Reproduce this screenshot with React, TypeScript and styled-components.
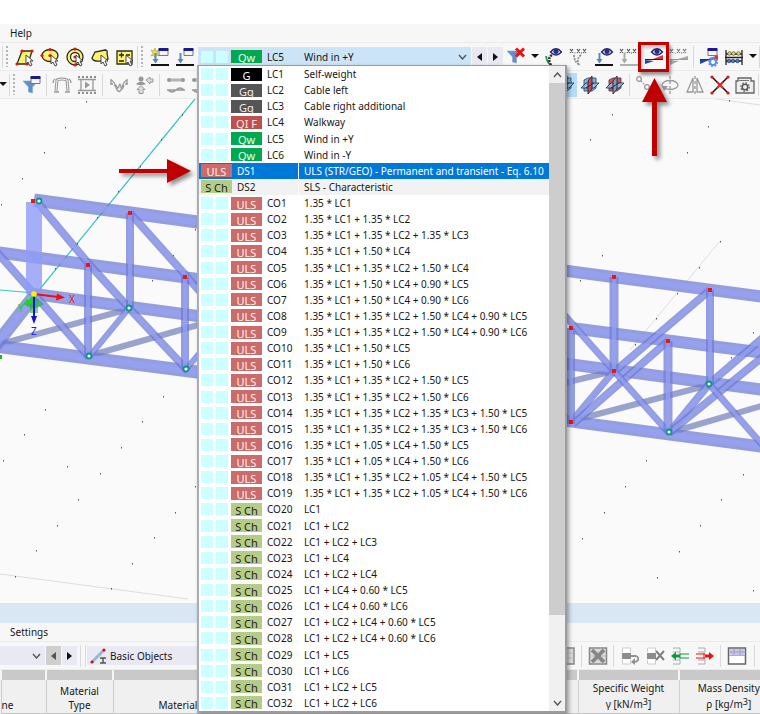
import React from "react";
import styled, { createGlobalStyle, css } from "styled-components";

const GlobalStyle = createGlobalStyle`
  * { box-sizing: border-box; }
  body {
    margin: 0;
    background: #fff;
    color: #161616;
    font-family: "Noto Sans", "Open Sans", sans-serif;
    font-size: 10px;
    line-height: 16px;
  }
  button, select { font: inherit; color: inherit; border: 0; margin: 0; padding: 0; background: none; }
`;

/* ---------- layout ---------- */

const Page = styled.div`
  display: flex;
  flex-direction: column;
  min-height: 100vh;
  padding-top: 24px;
  overflow: hidden;
`;

const MenuBar = styled.nav`
  display: flex;
  align-items: center;
  height: 19px;
  padding: 0 10px;
  background: #f7f7f7;
  border-bottom: 1px solid #ebebeb;
`;

const MenuButton = styled.button`
  line-height: 16px;
`;

const Toolbar = styled.div<{ $start?: number }>`
  display: flex;
  align-items: center;
  height: 28px;
  padding-left: ${(p) => p.$start ?? 0}px;
  background: #f7f7f7;
  border-bottom: 1px solid #ebebeb;
`;

const Grip = styled.span`
  flex: none;
  width: 9px;
  height: 21px;
  background: radial-gradient(circle at 1px 1px, #b4b4b4 1px, transparent 1px) 3px 0 / 3px 4px repeat-y;
`;

const Separator = styled.span<{ $gap?: number }>`
  flex: none;
  width: 1px;
  height: 22px;
  margin: 0 ${(p) => p.$gap ?? 0}px;
  background: #dadada;
`;

const ToolButton = styled.button<{ $narrow?: boolean; $active?: boolean; $edge?: boolean }>`
  position: relative;
  display: flex;
  flex: none;
  align-items: center;
  justify-content: center;
  width: ${(p) => (p.$narrow ? 13 : 25)}px;
  height: 24px;
  ${(p) => p.$edge && css`margin-left: -4px;`}
  ${(p) => p.$active && css`background: #b5dcf8;`}
`;

const StepButton = styled.button<{ $dim?: boolean }>`
  display: flex;
  flex: none;
  align-items: center;
  justify-content: center;
  width: 15px;
  height: 19px;
  margin-left: 1px;
  background: ${(p) => (p.$dim ? "#cfcfcf" : "#e9e9f4")};
`;

const RightGroup = styled.div`
  display: flex;
  align-items: center;
  margin-left: auto;
`;

/* ---------- load case selector ---------- */

const LoadCase = styled.div`
  position: relative;
  z-index: 5;
  flex: 1;
  min-width: 200px;
  margin-left: 1px;
`;

const LoadCaseButton = styled.button`
  display: flex;
  align-items: center;
  width: 100%;
  height: 19px;
  padding: 0 4px 0 3px;
  background: #cce4f7;
  text-align: left;
`;

const Popup = styled.div`
  position: absolute;
  top: 18px;
  left: -1px;
  display: flex;
  width: 370px;
  height: 648px;
  background: #fff;
  border: 2px solid #9b9ba1;
  border-top-width: 1px;
  border-left-color: #a9abb6;
  box-shadow: 2px 2px 4px rgba(0, 0, 0, 0.35);
`;

const OptionList = styled.ul`
  display: flex;
  flex: 1;
  flex-direction: column;
  min-width: 0;
  margin: 0;
  padding: 0;
  list-style: none;
`;

const Option = styled.li<{ $selected?: boolean; $shaded?: boolean }>`
  position: relative;
  display: flex;
  flex: 1 1 0;
  align-items: center;
  min-height: 0;
  padding-left: 2px;
  white-space: nowrap;
  color: ${(p) => (p.$selected ? "#fff" : "inherit")};
  background: ${(p) => (p.$selected ? "#0078d7" : p.$shaded ? "#f2f2f2" : "#fff")};
`;

const Swatch = styled.span`
  flex: none;
  width: 12px;
  height: 12px;
  margin-right: 3px;
  background: #ccffff;
`;

const tones = {
  green: ["#00a94f", "#e9fff0"],
  black: ["#000000", "#ffffff"],
  gray: ["#555555", "#eeeeee"],
  red: ["#c0504d", "#ffe8e4"],
  rose: ["#cc6b6b", "#fff0ee"],
  olive: ["#b5cc86", "#222222"],
} as const;
type Tone = keyof typeof tones;

const Badge = styled.span<{ $tone: Tone }>`
  flex: none;
  width: 31px;
  height: 13px;
  font-size: 11px;
  line-height: 15px;
  text-align: center;
  background: ${(p) => tones[p.$tone][0]};
  color: ${(p) => tones[p.$tone][1]};
`;

const Code = styled.span<{ $wide?: boolean }>`
  display: flex;
  flex: none;
  align-items: center;
  align-self: stretch;
  width: ${(p) => (p.$wide ? 67 : 37)}px;
  padding-left: 5px;
  border-right: 1px solid ${(p) => (p.$wide ? "#ffffff" : "transparent")};
`;

const Description = styled.span`
  flex: 1;
  min-width: 0;
  padding-left: 5px;
  line-height: 16px;
`;

const ScrollBar = styled.div`
  display: flex;
  flex: none;
  flex-direction: column;
  width: 16px;
  background: #f0f0f0;
`;

const ScrollButton = styled.button`
  display: flex;
  align-items: center;
  justify-content: center;
  height: 17px;
`;

const ScrollTrack = styled.div`
  flex: 1;
`;

const ScrollThumb = styled.div`
  height: 87%;
  background: #cdcdcd;
`;

/* ---------- callouts ---------- */

const CalloutBox = styled.span`
  position: absolute;
  inset: -3px;
  border: 3px solid #c00000;
  box-shadow: 2px 3px 3px rgba(0, 0, 0, 0.4), inset 2px 3px 3px rgba(0, 0, 0, 0.2);
  z-index: 3;
`;

const CalloutUp = styled.svg`
  position: absolute;
  top: 33px;
  left: 1px;
  z-index: 3;
  overflow: visible;
  pointer-events: none;
  filter: drop-shadow(3px 3px 2px rgba(0, 0, 0, 0.45));
`;

const CalloutRight = styled.svg`
  position: absolute;
  top: -4px;
  right: calc(100% + 8px);
  overflow: visible;
  pointer-events: none;
  filter: drop-shadow(3px 3px 2px rgba(0, 0, 0, 0.45));
`;

/* ---------- work area and lower panel ---------- */

const WorkArea = styled.main`
  display: flex;
  flex: 1;
  min-height: 300px;
  background: #fafafa;
`;

const Model = styled.svg`
  display: block;
  width: 100%;
  height: auto;
`;

const TitleBand = styled.div`
  height: 20px;
  background: #d9e6f3;
`;

const FieldSelect = styled.select`
  appearance: none;
  flex: 1;
  min-width: 0;
  height: 19px;
`;

const Field = styled.label<{ $width: number }>`
  display: flex;
  flex: none;
  align-items: center;
  gap: 3px;
  width: ${(p) => p.$width}px;
  height: 19px;
  padding-right: 4px;
  background: #e9e9f4;
`;

const DataTable = styled.table`
  width: 100%;
  table-layout: fixed;
  border-collapse: collapse;
  background: #f0f0f0;
  border-bottom: 1px solid #c4c4c4;
`;

const StripCell = styled.td`
  height: 10px;
  padding: 0;
  background: #c9c9c9;
  border-left: 2px solid #f4f4f4;
`;

const HeadCell = styled.th<{ $align?: "left" | "center"; $inset?: number; $loose?: boolean }>`
  height: 33px;
  padding: 0 0 1px ${(p) => p.$inset ?? 0}px;
  overflow: hidden;
  font-weight: 400;
  line-height: ${(p) => (p.$loose ? 16 : 14)}px;
  white-space: nowrap;
  text-align: ${(p) => p.$align ?? "center"};
  vertical-align: bottom;
  border-left: 1px solid #d0d0d0;
  sup { font-size: 9px; line-height: 0; vertical-align: 3px; }
`;

/* ---------- icons ---------- */

const Icon = ({ children }: { children: React.ReactNode }) => (
  <svg width="20" height="20" viewBox="0 0 20 20" fill="none" aria-hidden="true">
    {children}
  </svg>
);

const Cursor = () => (
  <path d="M11 8v9l2-2 2 4 2-1-2-4h3z" fill="#fff" stroke="#444" strokeWidth="1" />
);
const Dot = ({ x, y, c = "#e11" }: { x: number; y: number; c?: string }) => (
  <circle cx={x} cy={y} r="1.600" fill={c} />
);
const yellow = { fill: "#fbf26e", stroke: "#2c2c1c", strokeWidth: 1.3 };

const SelectRhomboid = () => (
  <Icon>
    <path d="M7 4h10l-4 13H2z" {...yellow} />
    <Dot x={7} y={4} /><Dot x={17} y={4} /><Dot x={2} y={17} /><Dot x={12} y={17} />
    <Cursor />
  </Icon>
);
const SelectEllipse = () => (
  <Icon>
    <ellipse cx="10" cy="8.500" rx="8" ry="6" {...yellow} />
    <Dot x={10} y={2.5} /><Dot x={2} y={8.5} /><Dot x={10} y={8.5} />
    <Cursor />
  </Icon>
);
const SelectRing = () => (
  <Icon>
    <circle cx="10" cy="10" r="8" {...yellow} />
    <circle cx="10" cy="10" r="4.500" fill="#fff" stroke="#2c2c1c" strokeWidth="1.300" />
    <Dot x={10} y={2} /><Dot x={10} y={10} /><Dot x={10} y={18} />
    <Cursor />
  </Icon>
);
const SelectPolygon = () => (
  <Icon>
    <path d="M2 11l3-6 10-2q3 0 2 3l1 6-7 2q-8 1-9-3z" {...yellow} />
    <Cursor />
  </Icon>
);
const SelectPlusMinus = () => (
  <Icon>
    <path d="M2 4h15v13H2z" {...yellow} />
    <path d="M4 8h5M6.500 5.500v5M4 14h5M11 8h4" stroke="#222" strokeWidth="1.300" />
    <Cursor />
  </Icon>
);
const WindowGlyph = () => (
  <>
    <path d="M9 1.500h9v7H9z" fill="#f5f5f5" stroke="#777" />
    <path d="M9 1.500h9v2H9z" fill="#1a1a8c" stroke="#1a1a8c" />
  </>
);
const DownLoad = ({ c = "#5b86bd" }: { c?: string }) => (
  <>
    <path d="M5.500 6v9" stroke={c} strokeWidth="2" />
    <path d="M2.500 12h6l-3 4.500z" fill={c} />
  </>
);
const NewLoad = () => (
  <Icon>
    <path d="M5 1l1 3 3-1-2 3 2 3-3-1-1 3-1-3-3 1 2-3-2-3 3 1z" fill="#e6e04a" stroke="#a8a22a" strokeWidth=".6" />
    <DownLoad />
    <WindowGlyph />
    <path d="M1 18h18" stroke="#111" strokeWidth="2" />
  </Icon>
);
const EditLoad = () => (
  <Icon>
    <DownLoad />
    <WindowGlyph />
    <path d="M1 18h18" stroke="#111" strokeWidth="2" />
  </Icon>
);
const Funnel = ({ y = 0 }: { y?: number }) => (
  <path d={`M1 ${4 + y}h15l-5.500 6v6l-4-1v-5z`} fill="#5f8fcb" stroke="#86a9d6" strokeWidth=".7" />
);
const FunnelOff = () => (
  <Icon>
    <Funnel />
    <path d="M10 1.500l8 8m0-8l-8 8" stroke="#f01010" strokeWidth="3" />
  </Icon>
);
const FunnelWindow = () => (
  <Icon>
    <Funnel y={2} />
    <WindowGlyph />
  </Icon>
);
const Eye = ({ x = 12, y = 5 }: { x?: number; y?: number }) => (
  <>
    <path d={`M${x - 5.5} ${y}q5.500-6.500 11 0q-5.500 6-11 0z`} fill="#e4e4f8" stroke="#22226a" strokeWidth="1.300" />
    <circle cx={x} cy={y - 0.5} r="2.500" fill="#2a2a88" />
  </>
);
const EyeLoads = () => (
  <Icon>
    <path d="M2 9q1 8 6 9" stroke="#1d9a52" strokeWidth="1.800" />
    <path d="M8 8c-5 3-2 8-1 11" stroke="#333" strokeWidth="2.500" strokeDasharray="2 1" />
    <Eye x={12} />
  </Icon>
);
const Marks = ({ c = "#555" }: { c?: string }) => (
  <path
    d="M1 2l3 4m0-4L1 6M8 2l3 4m0-4L8 6M14 2l3 4m0-4l-3 4M5.500 6h1M12 6h1"
    stroke={c}
    strokeWidth="1.200"
  />
);
const ValuesCurve = () => (
  <Icon>
    <Marks />
    <path d="M5 8q0 7 6 10M12 8q-5 4-2 10" stroke="#8c8c8c" strokeWidth="1.800" strokeDasharray="2 1" />
  </Icon>
);
const EyeSupport = () => (
  <Icon>
    <DownLoad />
    <Eye x={13} />
    <path d="M1 18h18" stroke="#111" strokeWidth="2" />
  </Icon>
);
const ValuesSupport = () => (
  <Icon>
    <Marks />
    <DownLoad c="#aaa" />
    <path d="M1 18h18" stroke="#999" strokeWidth="1.500" />
  </Icon>
);
const EyeResults = () => (
  <Icon>
    <path d="M1 13v4l9-3z" fill="#1f43b0" />
    <path d="M9 12l10-4v5z" fill="#e03333" />
    <path d="M1 12.500h18" stroke="#222" />
    <Eye x={13} />
  </Icon>
);
const ValuesResults = () => (
  <Icon>
    <Marks c="#777" />
    <path d="M1 13v5l9-4zM9 12l10-3v4z" fill="#aaa" />
    <path d="M1 12.500h18" stroke="#999" />
  </Icon>
);
const ResultSettings = () => (
  <Icon>
    <WindowGlyph />
    <path d="M1 12v5l9-4z" fill="#1f43b0" />
    <path d="M9 12l10-4v5z" fill="#e03333" />
    <path d="M1 12.500h10" stroke="#333" />
    <circle cx="14" cy="15" r="3" fill="#fff" stroke="#5c8fe0" strokeWidth="2" />
    <circle cx="14" cy="15" r="4.500" stroke="#5c8fe0" strokeWidth="1.200" strokeDasharray="1.800 1.700" />
  </Icon>
);
const Abacus = () => (
  <Icon>
    <path d="M2 3v15M18 3v15M2 7h16M2 14h16M1 10.500h18" stroke="#222" strokeWidth="1.300" />
    <g fill="#f2e04a" stroke="#444" strokeWidth=".7">
      <circle cx="5.500" cy="6.500" r="1.800" /><circle cx="9.500" cy="6.500" r="1.800" /><circle cx="14.500" cy="6.500" r="1.800" />
    </g>
    <g fill="#4a7ae0" stroke="#234" strokeWidth=".7">
      <circle cx="5" cy="14" r="1.800" /><circle cx="9" cy="14" r="1.800" /><circle cx="13.500" cy="14" r="1.800" />
    </g>
  </Icon>
);
const gray = { stroke: "#999", strokeWidth: 1.3 };
const BentFrame = () => (
  <Icon>
    <path d="M4 16L5 5q5-2 10 0l1 11" stroke="#999" strokeWidth="3" />
    <path d="M4 16L5 5q5-2 10 0l1 11" stroke="#f2f2f2" strokeWidth="1" />
    <path d="M1 8q0-3 2-4M19 8q0-3-2-4M2 17h5M13 17h5" {...gray} />
  </Icon>
);
const Film = () => (
  <Icon>
    <path d="M1 2h18M1 18h18" stroke="#8e8e8e" strokeWidth="2" strokeDasharray="2 2" />
    <path d="M1 4.500h18M1 15.500h18M4 5v10M16 5v10" {...gray} />
    <path d="M8 6.500v7l5-3.500z" fill="#999" />
  </Icon>
);
const Diagram = () => (
  <Icon>
    <path d="M2 4v5M18 4v5M1 9h3M16 9h3" {...gray} />
    <path d="M2 5q4 2 5 8 3 7 6 0 1-6 5-8" {...gray} />
    <path d="M5 11q2-2 3 1t2-1 2 1 3-2" {...gray} />
  </Icon>
);
const LoadArrows = () => (
  <Icon>
    <circle cx="7" cy="4" r="2.500" fill="#999" />
    <path d="M2 9q5-5 10 0l-3 1H4z" fill="#999" />
    <path d="M12 5l4-3v2h3v3h-3v2zM7 10.500l4 4H9v4H5v-4H3z" fill="#ddd" stroke="#999" />
  </Icon>
);
const Deformation = () => (
  <Icon>
    <path d="M3 5h14" stroke="#b5b5b5" strokeWidth="3" />
    <circle cx="3" cy="5" r="2" fill="#999" /><circle cx="17" cy="5" r="2" fill="#999" />
    <path d="M1 15h18M2 15q4 4 8 0t8 0" {...gray} />
  </Icon>
);
const ClipPlane = ({ solid = "#7fb2d6", slab = "#d6404a" }: { solid?: string; slab?: string }) => (
  <Icon>
    <path d="M4 5l4-2h8v10l-4 3H4z" fill={solid} stroke="#2c4f6a" strokeWidth=".9" />
    <path d="M1 13l5-5h13l-5 5z" fill="#8ec2e4" fillOpacity=".85" stroke="#1f3e58" strokeWidth=".9" />
    <path d="M8 6l4-5v13l-4 5z" fill={slab} fillOpacity=".9" stroke="#3d1a2a" strokeWidth=".9" />
    <path d="M6 13l8-5" stroke="#17324a" />
  </Icon>
);
const MoveNodes = () => (
  <Icon>
    <circle cx="4" cy="4" r="2.300" {...gray} /><circle cx="12" cy="12" r="2.300" {...gray} />
    <path d="M6 6l4 4" {...gray} strokeDasharray="1.500 1.500" />
  </Icon>
);
const Rotate = () => (
  <Icon>
    <ellipse cx="10" cy="10" rx="8" ry="4.500" {...gray} />
    <path d="M10 1v18" {...gray} strokeDasharray="3 2" />
    <path d="M2 11h6l-4 5z" fill="#999" />
  </Icon>
);
const Mirror = () => (
  <Icon>
    <path d="M8 3v14H2zM12 3v14h6z" {...gray} /><path d="M10 1v18" {...gray} strokeDasharray="3 2" />
  </Icon>
);
const CrossNodes = () => (
  <Icon>
    <path d="M2 2l16 16M18 2L2 18" stroke="#111" strokeWidth="1.500" />
    <Dot x={2} y={2} /><Dot x={18} y={2} /><Dot x={2} y={18} /><Dot x={18} y={18} />
    <path d="M7 7l6 6m0-6l-6 6" stroke="#e22" strokeWidth="1.800" />
  </Icon>
);
const Camera = () => (
  <Icon>
    <path d="M3 3h13v3h3v12H1V6h2z" fill="#eee" stroke="#666" strokeWidth="1.300" />
    <path d="M4 5.500h10" stroke="#777" />
    <circle cx="10" cy="12" r="2.800" stroke="#555" strokeWidth="1.500" />
    <circle cx="10" cy="12" r="4.200" stroke="#555" strokeWidth="1.200" strokeDasharray="1.500 1.800" />
  </Icon>
);
const Caret = () => (
  <svg width="8" height="5" viewBox="0 0 8 5" aria-hidden="true"><path d="M0 0h8L4 4z" fill="#111" /></svg>
);
const Chevron = ({ up }: { up?: boolean }) => (
  <svg width="9" height="6" viewBox="0 0 9 6" fill="none" aria-hidden="true">
    <path d={up ? "M1 5l3.500-4L8 5" : "M1 1l3.500 4L8 1"} stroke="#555" strokeWidth="1.400" />
  </svg>
);
const Triangle = ({ left, c = "#111" }: { left?: boolean; c?: string }) => (
  <svg width="5" height="8" viewBox="0 0 5 8" aria-hidden="true">
    <path d={left ? "M5 0v8L0 4z" : "M0 0v8l5-4z"} fill={c} />
  </svg>
);
const MemberGlyph = () => (
  <Icon>
    <path d="M5 16L17 4" stroke="#9bb5da" strokeWidth="3" />
    <Dot x={5} y={16} c="#c11" /><Dot x={17} y={4} c="#c11" />
    <path d="M13 12h6M16 12v5M13 17h6" stroke="#555" strokeWidth="1.500" />
  </Icon>
);
const GridOne = () => (
  <Icon><path d="M2 2h16v16H2z" fill="#ddd" stroke="#888" strokeWidth="1.500" /><path d="M2 7h16M2 12h16M12 2v16" stroke="#bbb" /></Icon>
);
const GridDelete = () => (
  <Icon>
    <path d="M1.500 2h17v16h-17z" fill="#dcdcdc" stroke="#888" strokeWidth="1.500" />
    <path d="M2 6h16M2 10h16M2 14h16M7 2v16M13 2v16" stroke="#bbb" />
    <path d="M4 4l12 12M16 4L4 16" stroke="#858585" strokeWidth="3.500" />
  </Icon>
);
const RowStack = () => (
  <>
    <path d="M2.500 6V2h8v4M2.500 14v4h8v-4" fill="#fff" stroke="#ccc" />
    <path d="M2 7h9v6H2z" fill="#8c8c8c" />
  </>
);
const RowCopy = () => (
  <Icon><RowStack /><path d="M11 10h5q3 1 2 4-1 2-4 2" stroke="#909090" strokeWidth="1.800" /><path d="M15 12v7l-4-3z" fill="#909090" /></Icon>
);
const RowDelete = () => (
  <Icon><RowStack /><path d="M11 5l8 9m0-9l-8 9" stroke="#808080" strokeWidth="2" /></Icon>
);
const RowArrow = ({ c, right }: { c: string; right?: boolean }) => (
  <Icon>
    <path d="M3 2h7v4H3M3 18h7v-4H3" stroke="#aaa" />
    <path d={right ? "M1 8h9M1 12h9M9 7v6" : "M19 8h-9M19 12h-9M10 7v6"} stroke={c} />
    <path d={right ? "M10 8.500h4V6l5 4-5 4v-2.500h-4z" : "M10 8.500H6V6l-5 4 5 4v-2.500h4z"} fill={c} />
  </Icon>
);
const TableView = () => (
  <Icon>
    <path d="M1.500 2h17v16h-17z" fill="#fff" stroke="#666" strokeWidth="1.500" />
    <path d="M2 3h16v6H2z" fill="#c5c5ee" /><path d="M2 6h16M2 9.500h16M7 3v6M13 3v6" stroke="#9a9ab8" strokeWidth=".8" />
  </Icon>
);

/* ---------- structural model ---------- */

type Seg = [number, number, number, number, number];

const chords: Seg[] = [
  [34, 200, 205, 223, 13], [-5, 252, 205, 280, 12], [34, 294, 205, 317, 12], [-5, 346, 205, 373, 13],
  [560, 270, 765, 297, 12], [571, 328, 765, 353, 12], [560, 363, 765, 390, 12], [560, 420, 765, 447, 12],
];
const posts: Seg[] = [
  [130, 213, 130, 308, 8], [88, 265, 88, 357, 8], [185, 277, 185, 369, 8],
  [614, 277, 614, 371, 9], [710, 290, 710, 384, 8], [571, 328, 571, 424, 8], [668, 341, 668, 432, 9],
];
const braces: Seg[] = [
  [38, 203, 88, 263, 8], [88, 263, 129, 308, 8], [129, 308, 188, 371, 8], [130, 213, 205, 297, 8],
  [34, 294, 89, 357, 8], [-5, 250, 34, 294, 8], [34, 296, -5, 346, 13], [89, 357, 129, 308, 6],
  [186, 369, 205, 347, 6],
  [710, 290, 614, 372, 8], [614, 371, 571, 422, 7], [668, 341, 573, 424, 8], [560, 310, 614, 371, 7],
  [614, 371, 669, 433, 7], [709, 384, 669, 433, 8], [765, 336, 709, 384, 8], [765, 355, 669, 433, 8],
  [709, 384, 765, 448, 7],
];
const ties: Seg[] = [
  [0, 344, 129, 309, 6], [92, 355, 205, 323, 6], [560, 384, 614, 371, 6], [575, 420, 709, 385, 6], [672, 432, 765, 405, 6],
];
const redNodes = [[33, 201], [130, 213], [88, 265], [185, 277], [614, 277], [710, 290], [571, 328], [668, 341], [614, 371], [571, 422]];
const tealNodes = [[39, 201], [129, 308], [89, 356], [186, 369], [709, 384], [669, 432]];
const gridDots = [
  [44, 152], [22, 178], [1, 204], [152, 280], [67, 466], [195, 229], [173, 255], [109, 332], [13, 319], [86, 101],
  [65, 127], [182, 114], [161, 139], [140, 166], [118, 191], [97, 217], [77, 243], [55, 268], [729, 100], [612, 114],
  [708, 126], [590, 139], [687, 152], [602, 255], [580, 280], [720, 241], [699, 267], [677, 293], [656, 318],
  [635, 344], [753, 332], [731, 357], [593, 396], [690, 408], [646, 460], [743, 474], [625, 486], [721, 499],
  [604, 512], [700, 525], [582, 538], [679, 551], [657, 577], [753, 590], [45, 409], [24, 434], [3, 460], [163, 396],
  [142, 421], [121, 447], [100, 473], [78, 499], [57, 525], [36, 550], [15, 576], [195, 486], [175, 512], [154, 537],
  [132, 563], [111, 588],
];

const Beam = ({ s, tie }: { s: Seg; tie?: boolean }) => {
  const [x1, y1, x2, y2, w] = s;
  const line = { x1, y1, x2, y2 };
  return (
    <g>
      <line {...line} stroke={tie ? "#7480bd" : "#6d7ad0"} strokeOpacity=".72" strokeWidth={w} />
      {!tie && <line {...line} stroke="#95a2f4" strokeOpacity=".75" strokeWidth={w * 0.5} />}
    </g>
  );
};

const StructureView = () => (
  <Model viewBox="0 99 760 504" preserveAspectRatio="xMidYMid slice" role="img" aria-label="Structural model">
    <path d="M35 295L195 99" stroke="#35c4c4" strokeWidth="1.200" />
    <path d="M0 290l34 3" stroke="#35c4c4" />
    <path d="M720 241L630 350M716 99l44 6M0 574l188 25" stroke="#dddddd" fill="none" />
    <g fill="#555">
      {gridDots.map(([x, y]) => <rect key={`${x}-${y}`} x={x} y={y} width="1" height="1.500" />)}
    </g>
    {ties.map((s, i) => <Beam key={i} s={s} tie />)}
    {chords.map((s, i) => <Beam key={i} s={s} />)}
    {braces.map((s, i) => <Beam key={i} s={s} />)}
    {posts.map((s, i) => <Beam key={i} s={s} />)}
    <path d="M26 202h16v92H26z" fill="#8f9cf6" fillOpacity=".8" />
    {redNodes.map(([x, y]) => <rect key={`${x}-${y}`} x={x - 2} y={y - 2} width="4" height="4" fill="#f01414" />)}
    {tealNodes.map(([x, y]) => (
      <circle key={`${x}-${y}`} cx={x} cy={y} r="2.500" fill="#fff" stroke="#0d9488" strokeWidth="1.800" />
    ))}
    <path d="M34 296l-10 8q10 8 20 0z" fill="#2fae50" fillOpacity=".75" />
    <path d="M30 304h8v9h-8z" fill="#2fae50" fillOpacity=".6" />
    <path d="M34 295l-7 9" stroke="#10e010" strokeWidth="2" />
    <path d="M23 305l4-6 5 4z" fill="#10e010" />
    <path d="M34 294l24 3" stroke="#f01010" strokeWidth="2" />
    <path d="M57 293.500l8 4-9 3z" fill="#f01010" />
    <path d="M34 294v24" stroke="#1414c8" strokeWidth="2" />
    <path d="M31 316h6l-3 8z" fill="#1414c8" />
    <circle cx="34" cy="294" r="2.800" fill="#ffee00" />
    <path d="M0 355h2v4H0z" fill="#20b030" />
    <text x="69" y="303" fontSize="10" fill="#f01010">X</text>
    <text x="31" y="335" fontSize="10" fill="#1c1ce0">Z</text>
    <text x="18" y="312" fontSize="10" fill="#10d010">Y</text>
  </Model>
);

/* ---------- data ---------- */

type Row = { tone: Tone; tag: string; code: string; text: string; group?: boolean };

const uls = [
  "1.35 * LC1",
  "1.35 * LC1 + 1.35 * LC2",
  "1.35 * LC1 + 1.35 * LC2 + 1.35 * LC3",
  "1.35 * LC1 + 1.50 * LC4",
  "1.35 * LC1 + 1.35 * LC2 + 1.50 * LC4",
  "1.35 * LC1 + 1.50 * LC4 + 0.90 * LC5",
  "1.35 * LC1 + 1.50 * LC4 + 0.90 * LC6",
  "1.35 * LC1 + 1.35 * LC2 + 1.50 * LC4 + 0.90 * LC5",
  "1.35 * LC1 + 1.35 * LC2 + 1.50 * LC4 + 0.90 * LC6",
  "1.35 * LC1 + 1.50 * LC5",
  "1.35 * LC1 + 1.50 * LC6",
  "1.35 * LC1 + 1.35 * LC2 + 1.50 * LC5",
  "1.35 * LC1 + 1.35 * LC2 + 1.50 * LC6",
  "1.35 * LC1 + 1.35 * LC2 + 1.35 * LC3 + 1.50 * LC5",
  "1.35 * LC1 + 1.35 * LC2 + 1.35 * LC3 + 1.50 * LC6",
  "1.35 * LC1 + 1.05 * LC4 + 1.50 * LC5",
  "1.35 * LC1 + 1.05 * LC4 + 1.50 * LC6",
  "1.35 * LC1 + 1.35 * LC2 + 1.05 * LC4 + 1.50 * LC5",
  "1.35 * LC1 + 1.35 * LC2 + 1.05 * LC4 + 1.50 * LC6",
];
const sls = [
  "LC1",
  "LC1 + LC2",
  "LC1 + LC2 + LC3",
  "LC1 + LC4",
  "LC1 + LC2 + LC4",
  "LC1 + LC4 + 0.60 * LC5",
  "LC1 + LC4 + 0.60 * LC6",
  "LC1 + LC2 + LC4 + 0.60 * LC5",
  "LC1 + LC2 + LC4 + 0.60 * LC6",
  "LC1 + LC5",
  "LC1 + LC6",
  "LC1 + LC2 + LC5",
  "LC1 + LC2 + LC6",
];
const rows: Row[] = [
  { tone: "black", tag: "G", code: "LC1", text: "Self-weight" },
  { tone: "gray", tag: "Gq", code: "LC2", text: "Cable left" },
  { tone: "gray", tag: "Gq", code: "LC3", text: "Cable right additional" },
  { tone: "red", tag: "QI F", code: "LC4", text: "Walkway" },
  { tone: "green", tag: "Qw", code: "LC5", text: "Wind in +Y" },
  { tone: "green", tag: "Qw", code: "LC6", text: "Wind in -Y" },
  { tone: "rose", tag: "ULS", code: "DS1", text: "ULS (STR/GEO) - Permanent and transient - Eq. 6.10", group: true },
  { tone: "olive", tag: "S Ch", code: "DS2", text: "SLS - Characteristic", group: true },
  ...uls.map((text, i): Row => ({ tone: "rose", tag: "ULS", code: `CO${i + 1}`, text })),
  ...sls.map((text, i): Row => ({ tone: "olive", tag: "S Ch", code: `CO${i + 20}`, text })),
];
const selected = "DS1";

const RowCells = ({ row }: { row: Row }) => (
  <>
    {!row.group && <><Swatch /><Swatch /></>}
    <Badge $tone={row.tone}>{row.tag}</Badge>
    <Code $wide={row.group}>{row.code}</Code>
    <Description>{row.text}</Description>
  </>
);

type ToolProps = {
  label: string;
  icon: React.ReactNode;
  $narrow?: boolean;
  $active?: boolean;
  $edge?: boolean;
  children?: React.ReactNode;
};
const Tool = ({ label, icon, children, ...rest }: ToolProps) => (
  <ToolButton type="button" aria-label={label} {...rest}>{icon}{children}</ToolButton>
);

export default function App() {
  return (
    <>
      <GlobalStyle />
      <Page>
        <MenuBar><MenuButton type="button">Help</MenuButton></MenuBar>

        <Toolbar $start={2} role="toolbar" aria-label="Selection and loads">
          <Separator />
          <Grip />
          <Tool label="Select by rhomboid" icon={<SelectRhomboid />} />
          <Tool label="Select by ellipse" icon={<SelectEllipse />} />
          <Tool label="Select by ring" icon={<SelectRing />} />
          <Tool label="Select by polygon" icon={<SelectPolygon />} />
          <Tool label="Add or remove selection" icon={<SelectPlusMinus />} />
          <Separator />
          <Grip />
          <Tool label="New load case" icon={<NewLoad />} />
          <Tool label="Edit load case" icon={<EditLoad />} />
          <LoadCase>
            <LoadCaseButton type="button" role="combobox" aria-label="Load case" aria-expanded="true" aria-controls="load-cases">
              <RowCells row={rows[4]} />
              <Chevron />
            </LoadCaseButton>
            <Popup>
              <OptionList id="load-cases" role="listbox" aria-label="Load cases">
                {rows.map((row) => (
                  <Option key={row.code} role="option" aria-selected={row.code === selected} $selected={row.code === selected} $shaded={row.group}>
                    <RowCells row={row} />
                    {row.code === selected && (
                      <CalloutRight width="72" height="24" viewBox="0 0 72 24" aria-hidden="true">
                        <path d="M0 10h48V0l24 12-24 12V14H0z" fill="#c00000" />
                      </CalloutRight>
                    )}
                  </Option>
                ))}
              </OptionList>
              <ScrollBar>
                <ScrollButton type="button" aria-label="Scroll up"><Chevron up /></ScrollButton>
                <ScrollTrack><ScrollThumb /></ScrollTrack>
                <ScrollButton type="button" aria-label="Scroll down"><Chevron /></ScrollButton>
              </ScrollBar>
            </Popup>
          </LoadCase>
          <StepButton type="button" aria-label="Previous load case"><Triangle left /></StepButton>
          <StepButton type="button" aria-label="Next load case"><Triangle /></StepButton>
          <Tool label="Clear filter" icon={<FunnelOff />} />
          <Tool label="Filter options" icon={<Caret />} $narrow />
          <Tool label="Show loads" icon={<EyeLoads />} />
          <Tool label="Show load values" icon={<ValuesCurve />} />
          <Tool label="Show supports" icon={<EyeSupport />} />
          <Tool label="Show support values" icon={<ValuesSupport />} />
          <Tool label="Show results" icon={<EyeResults />}>
            <CalloutBox />
            <CalloutUp width="25" height="78" viewBox="0 0 25 78" aria-hidden="true">
              <path d="M12.500 0L25 24H15v54h-5V24H0z" fill="#c00000" />
            </CalloutUp>
          </Tool>
          <Tool label="Show result values" icon={<ValuesResults />} />
          <Separator $gap={2} />
          <Tool label="Result settings" icon={<ResultSettings />} />
          <Tool label="Calculation" icon={<Abacus />} />
          <Tool label="Calculation options" icon={<Caret />} $narrow />
          <Separator />
        </Toolbar>

        <Toolbar role="toolbar" aria-label="Results and editing">
          <Tool label="More" icon={<Caret />} $narrow $edge />
          <Separator />
          <Grip />
          <Tool label="Filter window" icon={<FunnelWindow />} />
          <Separator $gap={2} />
          <Tool label="Frame deformation" icon={<BentFrame />} />
          <Tool label="Animation" icon={<Film />} />
          <Separator $gap={3} />
          <Tool label="Result diagram" icon={<Diagram />} />
          <Tool label="Load transfer" icon={<LoadArrows />} />
          <Separator $gap={3} />
          <Tool label="Member deformation" icon={<Deformation />} />
          <Tool label="Member result" icon={<Deformation />} />
          <RightGroup>
            <Tool label="Clip first plane" icon={<ClipPlane />} $active />
            <Tool label="Clip second plane" icon={<ClipPlane />} />
            <Tool label="Clip both planes" icon={<ClipPlane solid="#e04a50" slab="#6ea6cc" />} />
            <Separator $gap={2} />
            <Tool label="Move nodes" icon={<MoveNodes />} />
            <Tool label="Rotate" icon={<Rotate />} />
            <Tool label="Mirror" icon={<Mirror />} />
            <Tool label="Divide" icon={<CrossNodes />} />
            <Tool label="Snapshot settings" icon={<Camera />} />
            <Separator $gap={1} />
          </RightGroup>
        </Toolbar>

        <WorkArea><StructureView /></WorkArea>

        <TitleBand />
        <MenuBar><MenuButton type="button">Settings</MenuButton></MenuBar>
        <Toolbar role="toolbar" aria-label="Table tools">
          <Field $width={45}>
            <FieldSelect aria-label="Table"><option></option></FieldSelect>
            <Chevron />
          </Field>
          <StepButton type="button" aria-label="Previous table" $dim><Triangle left c="#555" /></StepButton>
          <StepButton type="button" aria-label="Next table"><Triangle /></StepButton>
          <Separator $gap={3} />
          <Separator $gap={1} />
          <Field $width={260}>
            <MemberGlyph />
            <FieldSelect aria-label="Category"><option>Basic Objects</option></FieldSelect>
            <Chevron />
          </Field>
          <RightGroup>
            <Tool label="Grid" icon={<GridOne />} />
            <Separator $gap={3} />
            <Tool label="Clear table" icon={<GridDelete />} />
            <Separator $gap={3} />
            <Tool label="Copy row" icon={<RowCopy />} />
            <Tool label="Delete row" icon={<RowDelete />} />
            <Tool label="Insert row" icon={<RowArrow c="#0a9a3c" />} />
            <Tool label="Move row out" icon={<RowArrow c="#f01010" right />} />
            <Separator $gap={3} />
            <Tool label="Table view" icon={<TableView />} />
            <Separator $gap={5} />
          </RightGroup>
        </Toolbar>
        <DataTable>
          <colgroup>
            <col width="45" /><col width="67" /><col /><col width="101" /><col width="81" />
          </colgroup>
          <thead>
            <tr aria-hidden="true"><StripCell /><StripCell /><StripCell /><StripCell /><StripCell /></tr>
            <tr>
              <HeadCell scope="col" $align="left">ne</HeadCell>
              <HeadCell scope="col">Material<br />Type</HeadCell>
              <HeadCell scope="col" $align="left" $inset={45}>Material</HeadCell>
              <HeadCell scope="col" $loose>Specific Weight<br />γ [kN/m<sup>3</sup>]</HeadCell>
              <HeadCell scope="col" $loose $inset={18}>Mass Density<br />ρ [kg/m<sup>3</sup>]</HeadCell>
            </tr>
          </thead>
        </DataTable>
      </Page>
    </>
  );
}
